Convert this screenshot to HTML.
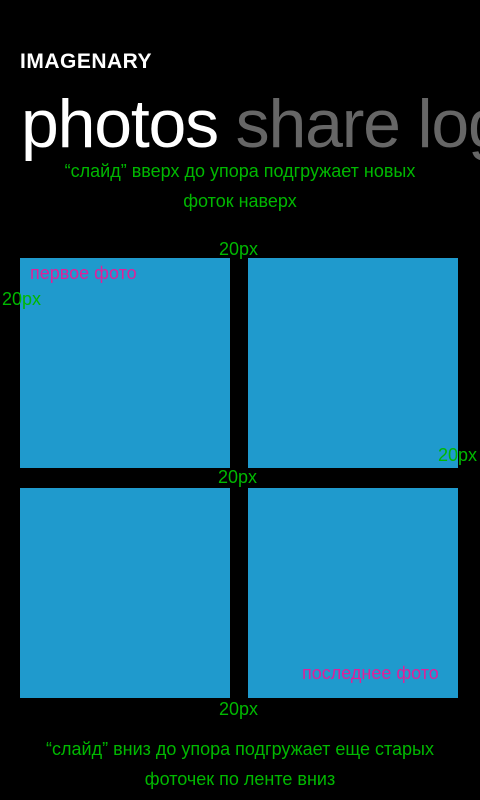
<!DOCTYPE html>
<html><head><meta charset="utf-8"><style>
html,body{margin:0;padding:0;background:#000;width:480px;height:800px;overflow:hidden;position:relative;font-family:"Liberation Sans","Noto Sans CJK SC",sans-serif}
#w{position:absolute;left:0;top:0;width:480px;height:800px;overflow:hidden}
.a{position:absolute;white-space:nowrap}
.t{position:absolute;background:#1f9acd;width:210px;height:210px}
.g{color:#00b800;font-size:18px}
.m{color:#e0209a;font-size:18px}
</style></head><body><div id="w">
<div class="a" style="left:20px;top:50px;color:#fff;font-size:21px;font-weight:bold;letter-spacing:0.5px">IMAGENARY</div>
<div class="a" style="left:21px;top:80px;width:459px;overflow:hidden;font-size:68px;letter-spacing:-1.2px;color:#fff;line-height:88px">photos <span style="color:#666">share log</span></div>
<div class="a g" style="left:0;width:480px;text-align:center;top:156px;line-height:30px">“слайд” вверх до упора подгружает новых<br>фоток наверх</div>
<div class="t" style="left:20px;top:258px"></div>
<div class="t" style="left:248px;top:258px"></div>
<div class="t" style="left:20px;top:488px"></div>
<div class="t" style="left:248px;top:488px"></div>
<div class="a g" style="left:219px;top:239px">20px</div>
<div class="a g" style="left:2px;top:289px">20px</div>
<div class="a g" style="left:438px;top:445px">20px</div>
<div class="a g" style="left:218px;top:467px">20px</div>
<div class="a g" style="left:219px;top:699px">20px</div>
<div class="a m" style="left:30px;top:263px">первое фото</div>
<div class="a m" style="left:302px;top:663px">последнее фото</div>
<div class="a g" style="left:0;width:480px;text-align:center;top:734px;line-height:30px">“слайд” вниз до упора подгружает еще старых<br>фоточек по ленте вниз</div>
</div></body></html>
